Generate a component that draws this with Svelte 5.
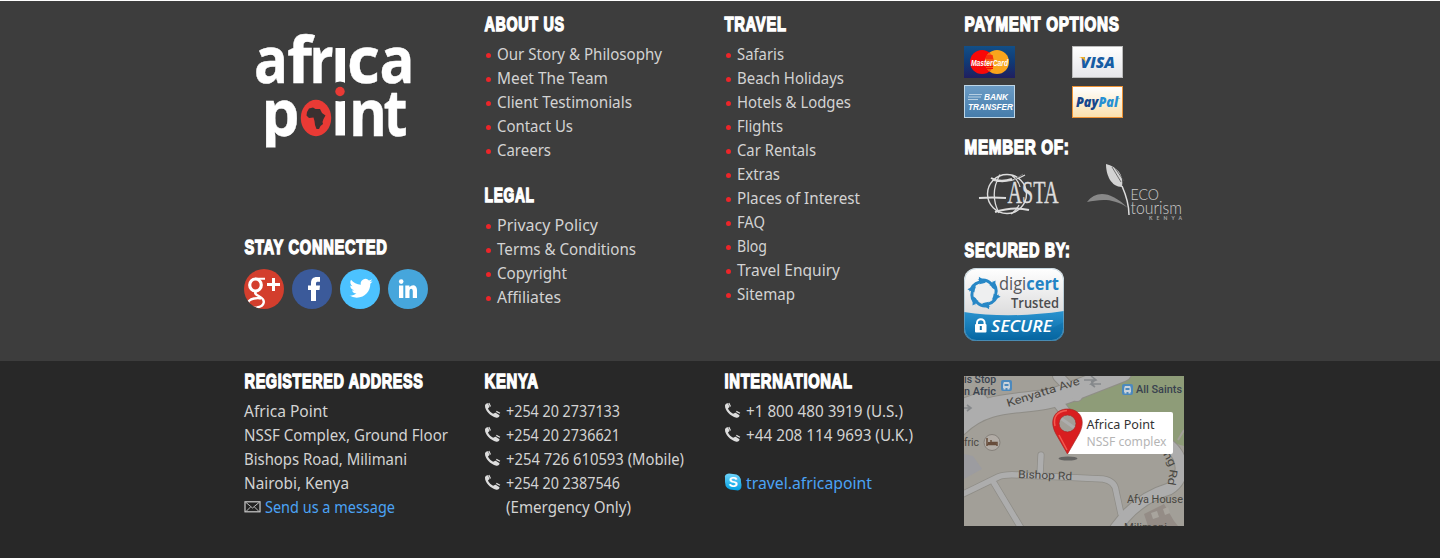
<script>
  const about = [['Our Story & Philosophy', 165], ['Meet The Team', 111], ['Client Testimonials', 135], ['Contact Us', 76], ['Careers', 54]];
  const legal = [['Privacy Policy', 101], ['Terms & Conditions', 139], ['Copyright', 70], ['Affiliates', 64]];
  const travel = [['Safaris', 47], ['Beach Holidays', 107], ['Hotels & Lodges', 114], ['Flights', 46], ['Car Rentals', 79], ['Extras', 43], ['Places of Interest', 123], ['FAQ', 28], ['Blog', 30], ['Travel Enquiry', 103], ['Sitemap', 58]];
  const address = [['Africa Point', 84], ['NSSF Complex, Ground Floor', 204], ['Bishops Road, Milimani', 163], ['Nairobi, Kenya', 105]];
  const kenya = [['+254 20 2737133', 114], ['+254 20 2736621', 114], ['+254 726 610593 (Mobile)', 178], ['+254 20 2387546', 114]];
  const intl = [['+1 800 480 3919 (U.S.)', 157], ['+44 208 114 9693 (U.K.)', 167]];
</script>

{#snippet heading(text, w)}
  <h3><svg width={w + 2} height="24"><text x="0.6" y="18.300" textLength={w} lengthAdjust="spacingAndGlyphs">{text}</text></svg></h3>
{/snippet}

{#snippet line(text, w)}
  <svg class="line" width={w + 2} height="24"><text x="0" y="17.400" textLength={w} lengthAdjust="spacingAndGlyphs">{text}</text></svg>
{/snippet}

{#snippet links(items)}
  <ul>
    {#each items as [text, w]}
      <li><i></i>{@render line(text, w)}</li>
    {/each}
  </ul>
{/snippet}

{#snippet phone()}
  <svg class="phone" width="17" height="17" viewBox="0 0 17 17">
    <path d="M1 3.2C1.6 1.6 3 .9 4 1.3L5.5 4.7C5.2 5.8 4.1 5.8 4 6.8C5.2 9 7 10.8 9.1 11.8C10 11.6 10.7 10.6 11.7 10.8L15.5 13.2C15.6 14.5 14.2 16 12.4 15.7C6.2 14.2.6 8.2 1 3.2Z" fill="#ddd" />
    <path d="M4.8 1L6.5 4.5M12.3 9.4L16 11.2" stroke="#ddd" stroke-width="1.2" />
  </svg>
{/snippet}

<footer>
  <section class="top">
    <div class="wrap">
      <div class="col">
        <svg class="logo" width="180" height="140" viewBox="244 20 180 140">
          <defs><clipPath id="stem"><rect x="244" y="90" width="60" height="57.500" /></clipPath></defs>
          <g fill="#fff">
            <text x="254" y="83" textLength="34" lengthAdjust="spacingAndGlyphs">a</text>
            <text x="287" y="83" textLength="25" lengthAdjust="spacingAndGlyphs">f</text>
            <text x="309.500" y="83" textLength="24" lengthAdjust="spacingAndGlyphs">r</text>
            <rect x="335.500" y="48" width="9.500" height="35" />
            <text x="347" y="83" textLength="33" lengthAdjust="spacingAndGlyphs">c</text>
            <text x="379.500" y="83" textLength="35" lengthAdjust="spacingAndGlyphs">a</text>
            <text x="261.500" y="135.500" textLength="38" lengthAdjust="spacingAndGlyphs" clip-path="url(#stem)">p</text>
            <rect x="335.500" y="101" width="9.500" height="34.500" />
            <text x="349" y="135.500" textLength="38" lengthAdjust="spacingAndGlyphs">n</text>
            <text x="383.500" y="135.500" textLength="24" lengthAdjust="spacingAndGlyphs">t</text>
          </g>
          <circle cx="340" cy="91.500" r="10" fill="#3d3d3d" />
          <circle cx="340" cy="91.500" r="4.700" fill="#e93a35" />
          <ellipse cx="316" cy="118" rx="15.200" ry="18.200" fill="#e93a35" />
          <path d="M309 108.500L313 107.500L315.500 109L320 109L322 113L325.500 115.500L323.500 119L322.500 122L323 124L320.500 126L319 129L316.500 129L315 125L314.500 121L313.500 117.500L309 118L306.500 115.500L307 112Z" fill="#3a3030" />
        </svg>
        {@render heading('STAY CONNECTED', 143)}
        <div class="social">
          <svg width="40" height="40"><defs><clipPath id="disc"><circle cx="20" cy="20" r="20" /></clipPath></defs>
            <g clip-path="url(#disc)"><rect width="40" height="40" fill="#d33e2d" />
              <g fill="none" stroke="#fff">
                <ellipse cx="11.500" cy="16" rx="5.800" ry="6" stroke-width="3.200" />
                <path d="M11 9.800H21" stroke-width="2" />
                <path d="M13.500 21.500C9 24 12 25.500 15.500 27.500C22 31 21 37 13 38.500C2 40 1 31 10 29.500C13 29 15 29 17 29.500" stroke-width="2.400" />
                <path d="M29.500 9V22M23 15.500H36" stroke-width="3" />
              </g></g></svg>
          <svg width="40" height="40"><circle cx="20" cy="20" r="20" fill="#3b5a9a" /><path d="M19 32V21H16V16.500H19V14C19 10 21 8 25 8H28V12.700H26C24.500 12.700 24 13.200 24 14.500V16.500H28L27.500 21H24V32Z" fill="#fff" /></svg>
          <svg width="40" height="40"><circle cx="20" cy="20" r="20" fill="#4cc2ff" /><path transform="translate(9.400 7.800) scale(.97 .96)" d="M23.950 4.570a10 10 0 0 1-2.820.770 4.960 4.960 0 0 0 2.160-2.720c-.950.550-2 .950-3.130 1.180a4.920 4.920 0 0 0-8.380 4.480C7.690 8.090 4.070 6.130 1.640 3.160a4.820 4.820 0 0 0 1.520 6.570 4.900 4.900 0 0 1-2.230-.610v.060a4.920 4.920 0 0 0 3.950 4.830 5 5 0 0 1-2.210.080 4.940 4.940 0 0 0 4.600 3.420A9.870 9.870 0 0 1 0 19.540a13.900 13.900 0 0 0 7.550 2.210c9.050 0 14-7.500 14-13.980 0-.210 0-.420-.020-.630A9.900 9.900 0 0 0 23.950 4.570Z" fill="#fff" /></svg>
          <svg width="40" height="40"><circle cx="20" cy="20" r="20" fill="#46a6dc" /><circle cx="13.200" cy="12.600" r="2.300" fill="#fff" /><path d="M11 16.500H15.300V29H11ZM17.300 16.500H21.400V18.300C23.800 15 29 15.500 29 21V29H24.800V22.300C24.800 19 21.500 19 21.500 22.300V29H17.300Z" fill="#fff" /></svg>
        </div>
      </div>

      <div class="col">
        {@render heading('ABOUT US', 80)}
        {@render links(about)}
        <div class="legal">{@render heading('LEGAL', 50)}</div>
        {@render links(legal)}
      </div>

      <div class="col">
        {@render heading('TRAVEL', 62)}
        {@render links(travel)}
      </div>

      <div class="col">
        {@render heading('PAYMENT OPTIONS', 155)}
        <div class="cards">
          <svg width="51" height="32">
            <defs><linearGradient id="mc" x2="0" y2="1"><stop stop-color="#124f87" /><stop offset=".5" stop-color="#103a75" /><stop offset="1" stop-color="#201e5f" /></linearGradient></defs>
            <rect width="51" height="32" fill="url(#mc)" /><circle cx="18" cy="16" r="12" fill="#f80808" /><circle cx="33" cy="16" r="12" fill="#f9a51c" />
            <path d="M25.500 6.600A12 12 0 0 0 25.500 25.400A12 12 0 0 0 25.500 6.600" fill="#f45a12" />
            <path d="M22 10H29M21.500 12H29M21.500 20.500H29M22 22.500H29" stroke="#f80808" />
            <text class="mc" x="7" y="19.500" textLength="37" lengthAdjust="spacingAndGlyphs">MasterCard</text></svg>
          <svg width="51" height="32">
            <defs><linearGradient id="vi" x2="0" y2="1"><stop stop-color="#fff" /><stop offset="1" stop-color="#e6e6ea" /></linearGradient></defs>
            <rect x=".5" y=".5" width="50" height="31" fill="url(#vi)" stroke="#bbb" />
            <text class="visa" x="8.500" y="22.200" textLength="34.500" lengthAdjust="spacingAndGlyphs">VISA</text><path d="M7 11H12.500L14 17C12.500 13.500 10 12 7 11Z" fill="#f7b022" /></svg>
          <svg width="51" height="33">
            <defs><linearGradient id="bt" x2="0" y2="1"><stop stop-color="#6c9cc5" /><stop offset="1" stop-color="#457cab" /></linearGradient></defs>
            <rect x=".5" y=".5" width="50" height="32" fill="url(#bt)" stroke="#bed6e6" />
            <path d="M5 9.500H18M4 12H17M4 14.500H14" stroke="#b6cfe3" />
            <text class="bank" x="20" y="15" textLength="24" lengthAdjust="spacingAndGlyphs">BANK</text><text class="bank" x="4" y="24.500" textLength="45" lengthAdjust="spacingAndGlyphs">TRANSFER</text></svg>
          <svg class="low" width="51" height="32">
            <defs><linearGradient id="pp" x2="0" y2="1"><stop stop-color="#fff" /><stop offset="1" stop-color="#fae0ad" /></linearGradient></defs>
            <rect x=".5" y=".5" width="50" height="31" fill="url(#pp)" stroke="#ee9234" />
            <text class="pay" x="4" y="20.500" textLength="42" lengthAdjust="spacingAndGlyphs"><tspan fill="#16468c">Pay</tspan><tspan fill="#2790d3">Pal</tspan></text><text class="tm" x="45.500" y="14">™</text></svg>
        </div>
        {@render heading('MEMBER OF:', 105)}
        <div class="members">
          <svg width="100" height="66" viewBox="964 163 100 66">
            <g fill="none" stroke="#ddd">
              <circle cx="1007" cy="195" r="19.500" stroke-width="1.400" /><path d="M1000 175.500Q989 195 999 214M992 181Q1007 186 1025 176M1012 176.500Q1019 182 1020 188M1019 206Q1016 212 1011 215" stroke-width="1.300" />
              <path d="M979 199Q992 198 1006 199" stroke-width="2" /><path d="M991 179Q1000 184 1012 180M995 213Q1013 207 1029 211" stroke-width="2" /><path d="M1014 181L1023 175" stroke="#777" />
            </g>
            <text class="asta" x="1007.500" y="204" textLength="51" lengthAdjust="spacingAndGlyphs">ASTA</text></svg>
          <svg width="120" height="66" viewBox="1064 163 120 66">
            <path d="M1106 165C1117 168 1124 175 1122 188C1111 188 1106 176 1106 165Z" fill="#d3d3d3" /><path d="M1112 168L1121 183M1115 169L1124 182" stroke="#555" stroke-width=".8" />
            <path d="M1122 187Q1129 203 1129 216" stroke="#ddd" stroke-width="1.500" fill="none" />
            <path d="M1087 203C1096 191 1111 192 1128 209C1112 198 1099 201 1087 203Z" fill="#888" />
            <text class="eco" x="1130.500" y="200.500" textLength="28.500" lengthAdjust="spacingAndGlyphs">ECO</text><text class="tour" x="1130.500" y="215" textLength="51.500" lengthAdjust="spacingAndGlyphs">tourism</text><text class="ken" x="1149" y="220.800" textLength="33">KENYA</text></svg>
        </div>
        {@render heading('SECURED BY:', 106)}
        <svg class="seal" width="100" height="73" viewBox="0 0 100 73">
          <defs><linearGradient id="wh" x2="0" y2="1"><stop stop-color="#fff" /><stop offset="1" stop-color="#c9c9ca" /></linearGradient><linearGradient id="bl" x2="0" y2="1"><stop stop-color="#2a93cf" /><stop offset="1" stop-color="#0465a1" /></linearGradient>
            <clipPath id="badge"><rect width="100" height="73" rx="12" /></clipPath></defs>
          <g clip-path="url(#badge)"><rect width="100" height="73" fill="url(#wh)" /><path d="M0 44Q45 51 100 43V73H0Z" fill="url(#bl)" /><path d="M0 46V73H20Q70 72 100 54V73H0" fill="#0966a0" opacity=".3" /></g>
          <rect x=".5" y=".5" width="99" height="72" rx="12" fill="none" stroke="#8eb1c4" opacity=".5" />
          <g fill="#2787c6">
            {#each [0, 60, 120, 180, 240, 300] as turn}
              <path transform="rotate({turn} 20 25)" d="M13.500 11.500Q22 8.500 28 14.500L31.500 12.500L31 21.500L23.500 18L26 16.500Q21 12.500 13.500 11.500Z" />
            {/each}
          </g>
          <circle cx="20" cy="25" r="9.800" fill="#eeeff0" />
          <text class="digi" x="35" y="22" textLength="60" lengthAdjust="spacingAndGlyphs"><tspan fill="#58595b">digi</tspan><tspan class="cert">cert</tspan></text>
          <text class="trusted" x="47" y="39.500" textLength="48" lengthAdjust="spacingAndGlyphs">Trusted</text>
          <text class="secure" x="27" y="64" textLength="61" lengthAdjust="spacingAndGlyphs">SECURE</text>
          <path d="M13 57V55A3.800 3.800 0 0 1 20.600 55V57" fill="none" stroke="#fff" stroke-width="2" /><rect x="11" y="56" width="11.500" height="8.500" rx="1" fill="#fff" /><path d="M16.800 58V62" stroke="#1472ab" stroke-width="2" />
        </svg>
      </div>
    </div>
  </section>

  <section class="bottom">
    <div class="wrap">
      <div class="col">
        {@render heading('REGISTERED ADDRESS', 179)}
        <div class="rows">
          {#each address as [text, w]}<div class="row">{@render line(text, w)}</div>{/each}
          <div class="row mail">
            <svg width="17" height="12"><rect x="1" y=".8" width="15" height="10" fill="#222" stroke="#ccc" stroke-width="1.200" /><path d="M2 1.500L8.500 7L15 1.500M2 10.500L6.500 6M15 10.500L10.500 6" fill="none" stroke="#bbb" /></svg>
            <a href="#message">{@render line('Send us a message', 130)}</a>
          </div>
        </div>
      </div>
      <div class="col">
        {@render heading('KENYA', 54)}
        <div class="rows">
          {#each kenya as [text, w]}<div class="row">{@render phone()}{@render line(text, w)}</div>{/each}
          <div class="row indent">{@render line('(Emergency Only)', 125)}</div>
        </div>
      </div>
      <div class="col">
        {@render heading('INTERNATIONAL', 128)}
        <div class="rows">
          {#each intl as [text, w]}<div class="row">{@render phone()}{@render line(text, w)}</div>{/each}
          <div class="row skype">
            <svg width="18" height="18"><defs><linearGradient id="sk" x2="0" y2="1"><stop stop-color="#6fd4fb" /><stop offset="1" stop-color="#009fe2" /></linearGradient></defs><path d="M1 5Q0 1 5 .5L9 1Q17 1 17 9Q19 16 14 17.500L10 17Q1 17 1 9Z" fill="url(#sk)" /><text class="s" x="4.500" y="14">S</text></svg>
            <a href="#skype">{@render line('travel.africapoint', 126)}</a>
          </div>
        </div>
      </div>
      <div class="col">
        <svg class="map" width="220" height="150" viewBox="0 0 220 150">
          <rect width="220" height="150" fill="#a29f98" />
          <path d="M96 29L142 0H220V70L96 35Z" fill="#8e9c78" />
          <path d="M0 78L9 80L18 93L0 103Z" fill="#9c9ca0" /><path d="M180 138L200 128L210 145L214 150H184Z" fill="#948c86" /><path d="M187 137l6-2 2 6-6 2zm12-4l5-2 2 6-5 2z" fill="#a8a49d" />
          <g fill="none" stroke="#8f8d87" stroke-linecap="round">
            <path d="M-5 50C28 18 65 33 104 17L158 -4M-5 34L15 27" stroke-width="21" /><path d="M94 0L113 20M95 28L111 49" stroke-width="12" />
            <path d="M-5 120L34 101Q40 98 55 99L139 103Q151 105 152 115L157 138M30 107L57 152M77 79L76 99" stroke-width="7" />
            <path d="M206 70C222 84 220 104 205 113Q178 121 160 142L152 152" stroke-width="13" />
          </g>
          <g fill="none" stroke="#adadad" stroke-linecap="round">
            <path d="M-5 50C28 18 65 33 104 17L158 -4M-5 34L15 27" stroke-width="19" /><path d="M94 0L113 20M95 28L111 49" stroke-width="10" />
            <path d="M-5 120L34 101Q40 98 55 99L139 103Q151 105 152 115L157 138M30 107L57 152M77 79L76 99" stroke-width="5.500" />
            <path d="M206 70C222 84 220 104 205 113Q178 121 160 142L152 152" stroke-width="11" />
          </g>
          <path d="M214 64L220 54" stroke="#a29f98" stroke-width="2" />
          <path d="M120 4H132M127 0L132 4L127 6M137 8H127L131 4M127 8L131 11M0 32H6M3 29L7 32L3 35" fill="none" stroke="#85888b" stroke-width="1.600" />
          <g class="place">
            <text x="0" y="7" textLength="32" lengthAdjust="spacingAndGlyphs">is Stop</text><text x="0" y="19" textLength="32" lengthAdjust="spacingAndGlyphs">n Afric</text><text x="172" y="17" textLength="46" lengthAdjust="spacingAndGlyphs">All Saints</text>
          </g>
          {#each [[37, 4], [158, 8]] as [x, y]}
            <g transform="translate({x} {y})"><rect width="11" height="11" rx="2" fill="#4c89bd" /><path d="M3 2H8Q9 3 9 8H2Q2 3 3 2ZM2.500 8H4.500V9.500H2.500ZM6.500 8H8.500V9.500H6.500Z" fill="#cad3db" /><path d="M3.500 4H7.500V6H3.500Z" fill="#4c89bd" /></g>
          {/each}
          <g class="road">
            <text transform="translate(44 31) rotate(-17.500)" textLength="76" lengthAdjust="spacingAndGlyphs">Kenyatta Ave</text>
            <text transform="translate(54 102) rotate(2)" textLength="54" lengthAdjust="spacingAndGlyphs">Bishop Rd</text>
            <text transform="translate(199 78) rotate(62)" textLength="15" lengthAdjust="spacingAndGlyphs">ng</text><text transform="translate(206 93) rotate(99)" textLength="16" lengthAdjust="spacingAndGlyphs">Rd</text>
            <text x="0" y="70" textLength="15" lengthAdjust="spacingAndGlyphs">fric</text><text x="163" y="127" textLength="56" lengthAdjust="spacingAndGlyphs">Afya House</text><text x="160" y="155" textLength="43" lengthAdjust="spacingAndGlyphs">Milimani</text>
          </g>
          <circle cx="28" cy="66.500" r="8" fill="#b2aca6" stroke="#85807a" /><path d="M23 62V70M23 68.500H33M33 70V66.500H27V64" fill="none" stroke="#674c3a" stroke-width="1.500" /><path d="M24 66H32V69H24Z" fill="#674c3a" />
          <path d="M110 36H207A2 2 0 0 1 209 38V76A2 2 0 0 1 207 78H103Z" fill="#fff" />
          <ellipse cx="104" cy="82.500" rx="9.500" ry="2" fill="#555" opacity=".8" />
          <circle cx="103.500" cy="47.500" r="9" fill="#a29f98" /><path d="M95 41L112 53" stroke="#adadad" stroke-width="3" />
          <path fill-rule="evenodd" d="M103.500 78L92 58C84 43 92 33 103.500 33C115 33 123 43 115 58ZM103.500 39A8.500 8.500 0 1 0 103.500 56A8.500 8.500 0 1 0 103.500 39Z" fill="#d91e20" stroke="#a72624" stroke-width=".7" /><path d="M91 50Q88 36 103 34.500M95 59L103 74" stroke="#f35a50" stroke-width="1.500" fill="none" />
          <text class="tip" x="122.500" y="53" textLength="68" lengthAdjust="spacingAndGlyphs">Africa Point</text><text class="tip grey" x="122.500" y="70" textLength="80" lengthAdjust="spacingAndGlyphs">NSSF complex</text>
        </svg>
      </div>
    </div>
  </section>
</footer>

<style>
  :global(body) { background: #282828; }
  footer { font-family: 'Noto Sans', sans-serif; }
  svg { display: block; flex: none; overflow: visible; }
  .top { height: 360px; background: #3d3d3d; border-top: 1px solid #fff; }
  .bottom { height: 197px; background: #282828; }
  .wrap { width: 960px; margin: 0 auto; display: flex; }
  .col { width: 236px; padding-left: 4px; padding-top: 12px; }
  .bottom .col { padding-top: 9px; }
  h3 { margin: 0; height: 24px; }
  h3 text { font: bold 19.6px 'Liberation Sans', sans-serif; letter-spacing: .9px; fill: #fff; stroke: #fff; stroke-width: 1.4px; }
  .line text { font-size: 15.6px; fill: #d3d3d3; }
  ul { list-style: none; padding: 0; margin: 6px 0 0; }
  li { display: flex; align-items: center; height: 24px; }
  li i { width: 5px; height: 5px; border-radius: 50%; background: #ec2529; margin: 1px 6px 0 2px; }
  .legal { margin-top: 21px; }
  .logo { margin: 7px 0 76px; }
  .logo text { font: bold 64px 'Open Sans', sans-serif; stroke: #fff; stroke-width: .4px; }
  .social { display: flex; gap: 8px; margin-top: 9px; }
  .cards { display: grid; grid-template-columns: 108px 108px; row-gap: 7px; margin: 9px 0 18px; }
  .low { margin-top: 1px; }
  .mc { font: italic bold 9.5px 'Liberation Sans', sans-serif; fill: #fff; }
  .visa { font: italic 800 16px 'Open Sans', sans-serif; fill: #175da4; }
  .bank { font: italic bold 9.2px 'Liberation Sans', sans-serif; fill: #fff; }
  .pay { font: italic 800 14px 'Open Sans', sans-serif; }
  .tm { font-size: 3px; fill: #4d83a5; }
  .members { display: flex; margin: 2px 0 11px; height: 66px; }
  .asta { font: 31px 'Liberation Serif', serif; fill: #ddd; stroke: #ddd; stroke-width: .4px; }
  .eco { font: 300 15.5px 'Lato', sans-serif; fill: #ccc; }
  .tour { font: 300 17px 'Lato', sans-serif; fill: #ccc; }
  .ken { font: bold 5px 'Lato', sans-serif; fill: #aaa; }
  .seal { margin-top: 5px; }
  .digi { font: 18px 'Open Sans', sans-serif; }
  .cert { font-weight: bold; fill: #2383c4; }
  .trusted { font: 600 14px 'Open Sans', sans-serif; fill: #4b4c4e; }
  .secure { font: italic 600 17px 'Open Sans', sans-serif; fill: #fff; }
  .rows { margin-top: 6px; }
  .row { display: flex; height: 24px; }
  .phone { margin: 2px 5px 0 0; }
  .indent { padding-left: 22px; }
  a .line text { fill: #4ba3f5; }
  .mail > svg:first-child { margin: 5px 4px 0 0; }
  .skype { margin-top: 24px; }
  .skype > svg { margin: 1px 4px 0 0; }
  .s { font: bold 14px 'Liberation Sans', sans-serif; fill: #fff; }
  .map { margin-top: 6px; overflow: hidden; }
  .place text { font: 500 11px Roboto, sans-serif; fill: #39424f; }
  .road text { font: 11px Roboto, sans-serif; fill: #494742; }
  .tip { font: 12.5px 'Noto Sans', sans-serif; fill: #333; }
  .grey { fill: #b5b5b5; }
</style>
